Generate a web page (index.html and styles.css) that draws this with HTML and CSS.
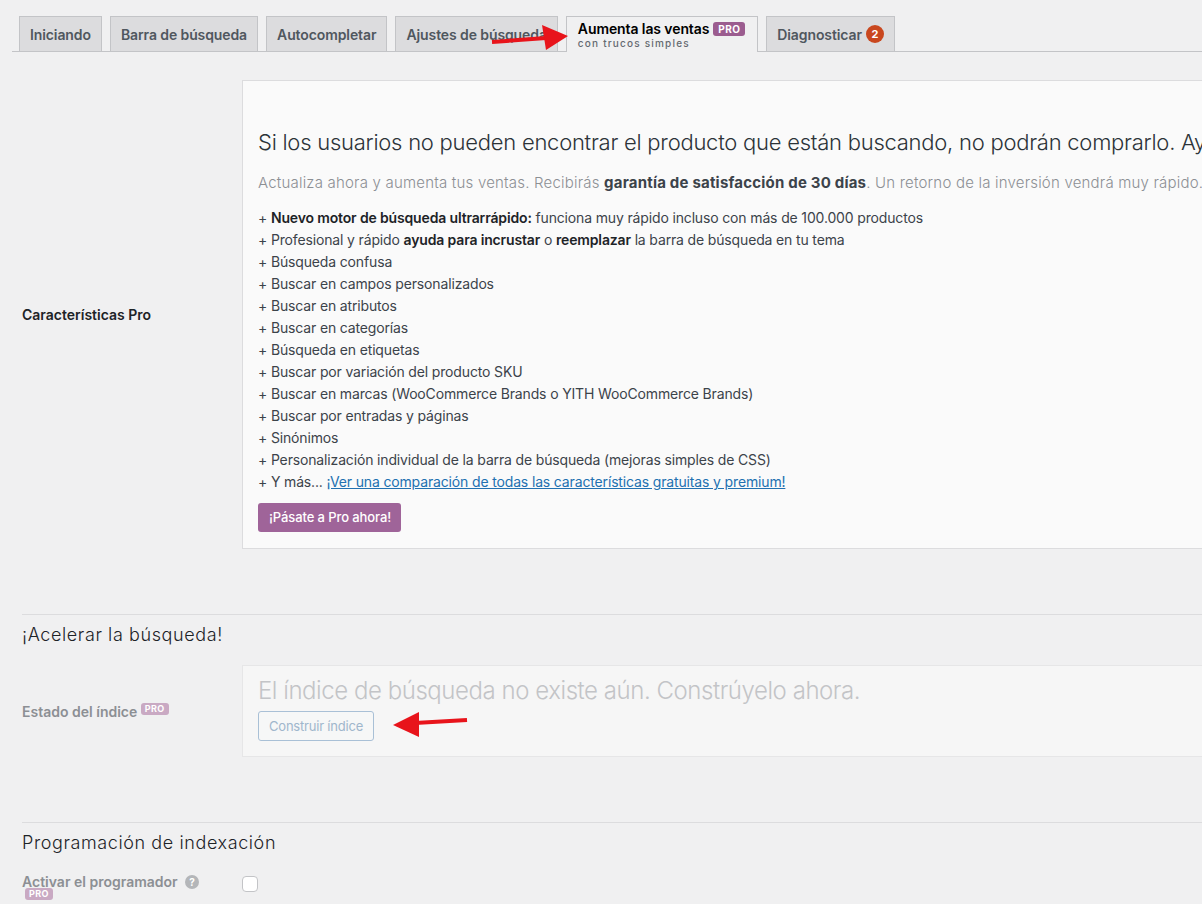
FILE: index.html
```html
<!DOCTYPE html>
<html lang="es">
<head>
  <meta charset="UTF-8">
  <meta name="viewport" content="width=device-width, initial-scale=1.0">
  <title>Ajustes de búsqueda</title>
  <link rel="stylesheet" href="styles.css">
</head>
<body>
  <div class="wrap">
    <!-- Tabs -->
    <nav class="nav-tabs">
      <a href="#" class="nav-tab">Iniciando</a>
      <a href="#" class="nav-tab">Barra de búsqueda</a>
      <a href="#" class="nav-tab">Autocompletar</a>
      <a href="#" class="nav-tab">Ajustes de búsqueda</a>
      <a href="#" class="nav-tab nav-tab-active">
        <span class="tab-title">Aumenta las ventas <span class="pro-badge">PRO</span></span>
        <span class="tab-sub">con trucos simples</span>
      </a>
      <a href="#" class="nav-tab">Diagnosticar <span class="count">2</span></a>
    </nav>

    <!-- Pro features -->
    <div class="form-row row-pro">
      <div class="row-label">Características Pro</div>
      <div class="row-field">
        <div class="pro-box">
          <h2 class="pro-head">Si los usuarios no pueden encontrar el producto que están buscando, no podrán comprarlo. Ayúdales a encontrarlo.</h2>
          <p class="pro-sub">Actualiza ahora y aumenta tus ventas. Recibirás <strong>garantía de satisfacción de 30 días</strong>. Un retorno de la inversión vendrá muy rápido.</p>
          <ul class="pro-list">
            <li>+ <strong>Nuevo motor de búsqueda ultrarrápido:</strong> funciona muy rápido incluso con más de 100.000 productos</li>
            <li>+ Profesional y rápido <strong>ayuda para incrustar</strong> o <strong>reemplazar</strong> la barra de búsqueda en tu tema</li>
            <li>+ Búsqueda confusa</li>
            <li>+ Buscar en campos personalizados</li>
            <li>+ Buscar en atributos</li>
            <li>+ Buscar en categorías</li>
            <li>+ Búsqueda en etiquetas</li>
            <li>+ Buscar por variación del producto SKU</li>
            <li>+ Buscar en marcas (WooCommerce Brands o YITH WooCommerce Brands)</li>
            <li>+ Buscar por entradas y páginas</li>
            <li>+ Sinónimos</li>
            <li>+ Personalización individual de la barra de búsqueda (mejoras simples de CSS)</li>
            <li>+ Y más... <a href="#">¡Ver una comparación de todas las características gratuitas y premium!</a></li>
          </ul>
          <a href="#" class="btn-pro">¡Pásate a Pro ahora!</a>
        </div>
      </div>
    </div>

    <!-- Speed up -->
    <h3 class="section-title">¡Acelerar la búsqueda!</h3>
    <div class="form-row row-index">
      <div class="row-label muted">Estado del índice <span class="pro-badge light">PRO</span></div>
      <div class="row-field">
        <div class="index-box">
          <p class="index-msg">El índice de búsqueda no existe aún. Constrúyelo ahora.</p>
          <button class="btn-index" disabled>Construir índice</button>
        </div>
      </div>
    </div>

    <!-- Scheduler -->
    <h3 class="section-title second">Programación de indexación</h3>
    <div class="form-row row-sched">
      <div class="row-label muted">
        Activar el programador <span class="help">?</span>
        <span class="pro-badge light block">PRO</span>
      </div>
      <div class="row-field">
        <input type="checkbox" class="check" disabled>
      </div>
    </div>

    <!-- Red arrows drawn over the screenshot -->
    <svg class="arrow arrow-tab" width="80" height="30" viewBox="0 0 80 30">
      <line x1="2" y1="19" x2="56" y2="15" stroke="#e8141b" stroke-width="4"/>
      <polygon points="78,13 52,2 56,27" fill="#e8141b"/>
    </svg>
    <svg class="arrow arrow-index" width="80" height="30" viewBox="0 0 80 30">
      <line x1="76" y1="10" x2="24" y2="13" stroke="#e8141b" stroke-width="4"/>
      <polygon points="2,15 28,2 28,27" fill="#e8141b"/>
    </svg>
  </div>
</body>
</html>
```

FILE: styles.css
```css
body {
  margin: 0;
  background: #f0f0f1;
  font-family: Inter, "Noto Sans", Arial, sans-serif;
  font-size: 14px;
  color: #1d2327;
  overflow: hidden;
}

.wrap {
  position: relative;
  padding: 16px 0 0 12px;
  width: 1400px;
}

/* tabs */
.nav-tabs {
  display: flex;
  gap: 8px;
  padding-left: 7px;
  border-bottom: 1px solid #c3c4c7;
  height: 35px;
}

.nav-tab {
  display: flex;
  align-items: center;
  gap: 4px;
  padding: 0 10px;
  height: 34px;
  background: #dcdcde;
  border: 1px solid #c3c4c7;
  border-bottom: none;
  font-size: 14px;
  font-weight: 600;
  color: #50575e;
  text-decoration: none;
  letter-spacing: -0.1px;
}

.nav-tab-active {
  flex-direction: column;
  align-items: flex-start;
  justify-content: center;
  gap: 0;
  background: #f0f0f1;
  height: 35px;
  margin-bottom: -1px;
  padding: 0 12px 0 11px;
  color: #000;
}

.tab-title {
  display: flex;
  align-items: center;
  gap: 4px;
  line-height: 16px;
}

.tab-sub {
  font-size: 10px;
  font-weight: 500;
  letter-spacing: 1.2px;
  color: #646970;
  line-height: 12px;
}

.pro-badge {
  display: inline-block;
  background: #9b5c8f;
  color: #fff;
  font-size: 10px;
  font-weight: 700;
  line-height: 14px;
  padding: 0 5px;
  border-radius: 3px;
  letter-spacing: 0.4px;
}

.pro-badge.light {
  background: #c9a9c3;
  font-size: 9px;
  line-height: 12px;
  padding: 0 4px;
  vertical-align: 5px;
}

.pro-badge.block {
  display: block;
  width: fit-content;
  margin: -2px 0 0 3px;
  vertical-align: 0;
}

.count {
  display: inline-flex;
  align-items: center;
  justify-content: center;
  width: 18px;
  height: 18px;
  border-radius: 50%;
  background: #c9471e;
  color: #fff;
  font-size: 11px;
  font-weight: 700;
}

/* form rows */
.form-row {
  display: flex;
  align-items: center;
  padding-left: 10px;
}

.row-label {
  width: 220px;
  flex-shrink: 0;
  font-weight: 600;
  color: #1d2327;
}

.row-label.muted {
  color: #8c8f94;
}

.row-pro {
  margin-top: 28px;
}

.pro-box {
  width: 1100px;
  background: #fafafa;
  border: 1px solid #dcdcde;
  padding: 0 15px 16px;
}

.pro-head {
  margin: 46px 0 0;
  font-size: 22px;
  font-weight: 300;
  line-height: 30px;
  letter-spacing: -0.25px;
  color: #2c3338;
  white-space: nowrap;
}

.pro-sub {
  margin: 16px 0 14px;
  font-size: 15px;
  font-weight: 300;
  line-height: 20px;
  letter-spacing: 0.2px;
  color: #8c8f94;
  white-space: nowrap;
}

.pro-sub strong {
  font-weight: 700;
  color: #3c434a;
}

.pro-list {
  list-style: none;
  margin: 0;
  padding: 0;
  font-size: 14px;
  line-height: 22px;
  color: #3c434a;
  letter-spacing: -0.15px;
}

.pro-list strong {
  font-weight: 600;
  color: #1d2327;
}

.pro-list a {
  color: #2271b1;
}

.btn-pro {
  display: inline-block;
  margin-top: 10px;
  background: #9f6499;
  color: #fff;
  font-size: 13px;
  font-weight: 500;
  line-height: 29px;
  padding: 0 10px 0 11px;
  border-radius: 3px;
  text-decoration: none;
  letter-spacing: -0.1px;
}

/* section titles */
.section-title {
  margin: 65px 0 0 10px;
  padding-top: 9px;
  border-top: 1px solid #dcdcde;
  font-size: 18px;
  font-weight: 300;
  letter-spacing: 0.6px;
  line-height: 22px;
  color: #1d2327;
}

.section-title.second {
  margin-top: 65px;
}

.row-index {
  margin-top: 19px;
}

.index-box {
  width: 1100px;
  background: #f6f6f6;
  border: 1px solid #e6e6e7;
  padding: 10px 15px 15px;
}

.index-msg {
  margin: 0 0 5px;
  font-size: 24px;
  font-weight: 300;
  line-height: 30px;
  letter-spacing: -0.45px;
  color: #c3c4c7;
}

.btn-index {
  font-family: inherit;
  font-size: 13px;
  color: #9fb6cc;
  background: #f6f7f7;
  border: 1px solid #a9c0d6;
  border-radius: 3px;
  height: 30px;
  padding: 0 10px;
  letter-spacing: -0.2px;
}

.row-sched {
  margin-top: 19px;
  align-items: flex-start;
}

.help {
  display: inline-flex;
  align-items: center;
  justify-content: center;
  width: 14px;
  height: 14px;
  border-radius: 50%;
  background: #b4b6b9;
  color: #fff;
  font-size: 10px;
  font-weight: 700;
  margin-left: 4px;
  vertical-align: 1px;
}

.check {
  appearance: none;
  width: 16px;
  height: 16px;
  margin: 3px 0 0;
  border: 1px solid #c3c4c7;
  border-radius: 4px;
  background: #fff;
}

/* overlays */
.arrow {
  position: absolute;
}

.arrow-tab {
  left: 490px;
  top: 23px;
}

.arrow-index {
  left: 391px;
  top: 710px;
}
```
